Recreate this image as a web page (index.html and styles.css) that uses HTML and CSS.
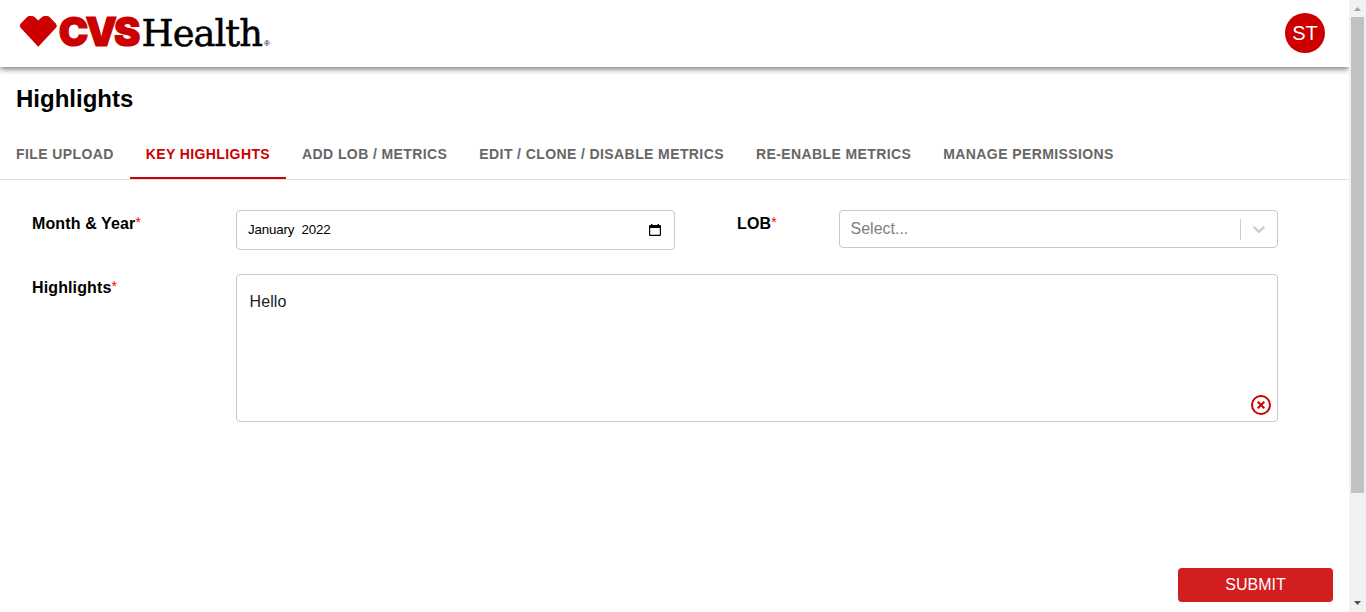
FILE: index.html
```html
<!DOCTYPE html>
<html lang="en">
<head>
<meta charset="utf-8">
<title>Highlights</title>
<link rel="stylesheet" href="styles.css">
</head>
<body>
<div class="window">
  <div class="page">
    <header class="header">
      <svg class="logo" width="256" height="40" viewBox="0 0 256 40" role="img" aria-label="CVS Health">
        <path class="heart" d="M18.3 8.6 21.5 5.4Q23 4 25 4H27Q28.6 4 30 5.4L35.8 11.4Q37.6 13.5 36 15.8L18.3 34.8 .6 15.8Q-1 13.5 .8 11.4L6.6 5.4Q8 4 9.6 4H11.6Q13.6 4 15.1 5.4Z"/>
        <text class="logo-cvs" x="38.8" y="34" textLength="78.5" lengthAdjust="spacingAndGlyphs">CVS</text>
        <text class="logo-health" x="121.5" y="34" textLength="120.5" lengthAdjust="spacingAndGlyphs">Health</text>
        <text class="logo-reg" x="244" y="34" textLength="6" lengthAdjust="spacingAndGlyphs">®</text>
      </svg>
      <div class="avatar">ST</div>
    </header>
    <h1 class="title">Highlights</h1>
    <nav class="tabs">
      <a class="tab">FILE UPLOAD</a>
      <a class="tab tab-active">KEY HIGHLIGHTS</a>
      <a class="tab">ADD LOB / METRICS</a>
      <a class="tab">EDIT / CLONE / DISABLE METRICS</a>
      <a class="tab">RE-ENABLE METRICS</a>
      <a class="tab">MANAGE PERMISSIONS</a>
    </nav>
    <main class="form">
      <label class="label">Month &amp; Year<span class="req">*</span></label>
      <div class="field month">
        <span class="month-value">January&nbsp; 2022</span>
        <svg width="12" height="12" viewBox="0 0 12 12"><path fill="#000" fill-rule="evenodd" d="M2 0h1.4v1h5.2V0H10v1h1a1 1 0 0 1 1 1v9a1 1 0 0 1-1 1H1a1 1 0 0 1-1-1V2a1 1 0 0 1 1-1h1ZM1.2 4v6.8h9.6V4Z"/></svg>
      </div>
      <label class="label">LOB<span class="req">*</span></label>
      <div class="field select">
        <span class="placeholder">Select...</span>
        <span class="divider"></span>
        <svg class="chevron" width="20" height="20" viewBox="0 0 20 20"><path d="M4.516 7.548c0.436-0.446 1.043-0.481 1.576 0l3.908 3.747 3.908-3.747c0.533-0.481 1.141-0.446 1.574 0 0.436 0.445 0.408 1.197 0 1.615-0.406 0.418-4.695 4.502-4.695 4.502-0.217 0.223-0.502 0.335-0.787 0.335s-0.57-0.112-0.789-0.335c0 0-4.287-4.084-4.695-4.502s-0.436-1.17 0-1.615z"/></svg>
      </div>
      <label class="label">Highlights<span class="req">*</span></label>
      <div class="field area">
        <span class="area-text">Hello</span>
        <svg class="clear" width="20" height="20" viewBox="0 0 20 20"><circle cx="10" cy="10" r="9"/><path d="m6.7 6.7 6.6 6.6m0-6.6-6.6 6.6"/></svg>
      </div>
    </main>
    <footer class="footer"><button class="submit">SUBMIT</button></footer>
  </div>
  <div class="scrollbar">
    <svg width="17" height="17" viewBox="0 0 17 17"><path fill="#a3a3a3" d="M5 11 8.5 7 12 11Z"/></svg>
    <div class="thumb"></div>
    <svg class="down" width="17" height="17" viewBox="0 0 17 17"><path fill="#505050" d="M5 6h7L8.5 10Z"/></svg>
  </div>
</div>
</body>
</html>
```
FILE: styles.css
```css
* { box-sizing: border-box; }
body {
  margin: 0;
  overflow: hidden;
  background: #fff;
  color: #000;
  font-family: "Liberation Sans", Arial, sans-serif;
}
.window { display: flex; height: 612px; }
.page { width: 1349px; display: flex; flex-direction: column; overflow: hidden; }
.header {
  height: 67px;
  flex: none;
  display: flex;
  align-items: flex-start;
  justify-content: space-between;
  padding: 12px 24px 0 20px;
  box-shadow: 0 2px 6px rgba(0, 0, 0, .55);
}
.logo { display: block; overflow: visible; }
.heart { fill: #c00; }
.logo-cvs { font: 900 40px Inter, "Liberation Sans", sans-serif; letter-spacing: -3px; fill: #c00; stroke: #c00; stroke-width: 1.2; }
.logo-health { font: 38px "DejaVu Serif", serif; letter-spacing: -1px; fill: #000; stroke: #000; stroke-width: .5; }
.logo-reg { font: 8px "Liberation Sans", sans-serif; fill: #000; }
.avatar {
  width: 40px;
  height: 40px;
  margin-top: 1px;
  border-radius: 50%;
  background: #c00;
  color: #fff;
  font-size: 20px;
  line-height: 40px;
  text-align: center;
}
.title { margin: 18px 0 0 16px; font-size: 24px; line-height: 28px; }
.tabs { display: flex; height: 51px; margin-top: 16px; border-bottom: 1px solid #e0e0e0; }
.tab {
  height: 50px;
  padding: 0 16px;
  color: #666;
  font-size: 14px;
  font-weight: 700;
  line-height: 50px;
  letter-spacing: .4px;
  white-space: nowrap;
}
.tab-active { color: #c00; border-bottom: 2px solid #c00; }
.form {
  display: grid;
  grid-template-columns: 204px 439px 62px 102px 439px;
  grid-template-rows: 40px 148px;
  row-gap: 24px;
  padding: 30px 0 0 32px;
}
.label { padding-top: 4px; font-size: 16px; font-weight: 700; line-height: 19px; letter-spacing: .12px; }
.label:nth-of-type(2) { grid-column: 4; }
.req { color: red; font-size: 14px; font-weight: 400; position: relative; top: -2px; line-height: 1; }
.field { display: flex; border: 1px solid #c8c8c8; border-radius: 4px; }
.month { align-items: center; justify-content: space-between; padding: 0 13px 0 11px; }
.month-value { padding-bottom: 2px; font-size: 13.33px; letter-spacing: -.15px; }
.select { height: 38px; align-items: center; padding-left: 10.5px; }
.placeholder { flex: 1; color: #808080; font-size: 16px; }
.divider { width: 1px; height: 21px; background: #ccc; }
.chevron { margin: 0 8px; fill: #ccc; }
.area { grid-column: 2 / 6; justify-content: space-between; padding: 17px 6px 6px 12.5px; }
.area-text { color: #222; font-size: 16px; line-height: 19px; letter-spacing: .1px; }
.clear { align-self: flex-end; fill: none; stroke: #c00; stroke-width: 2; }
.footer { margin-top: auto; padding: 0 16px 10px; display: flex; justify-content: flex-end; }
.submit {
  width: 155px;
  height: 34px;
  border: 0;
  border-radius: 4px;
  background: #d21e1e;
  color: #fff;
  font: 16px "Liberation Sans", Arial, sans-serif;
}
.scrollbar { width: 17px; display: flex; flex-direction: column; align-items: center; background: #f1f1f1; }
.thumb { width: 13px; height: 476px; background: #c1c1c1; }
.down { margin-top: auto; }
```
